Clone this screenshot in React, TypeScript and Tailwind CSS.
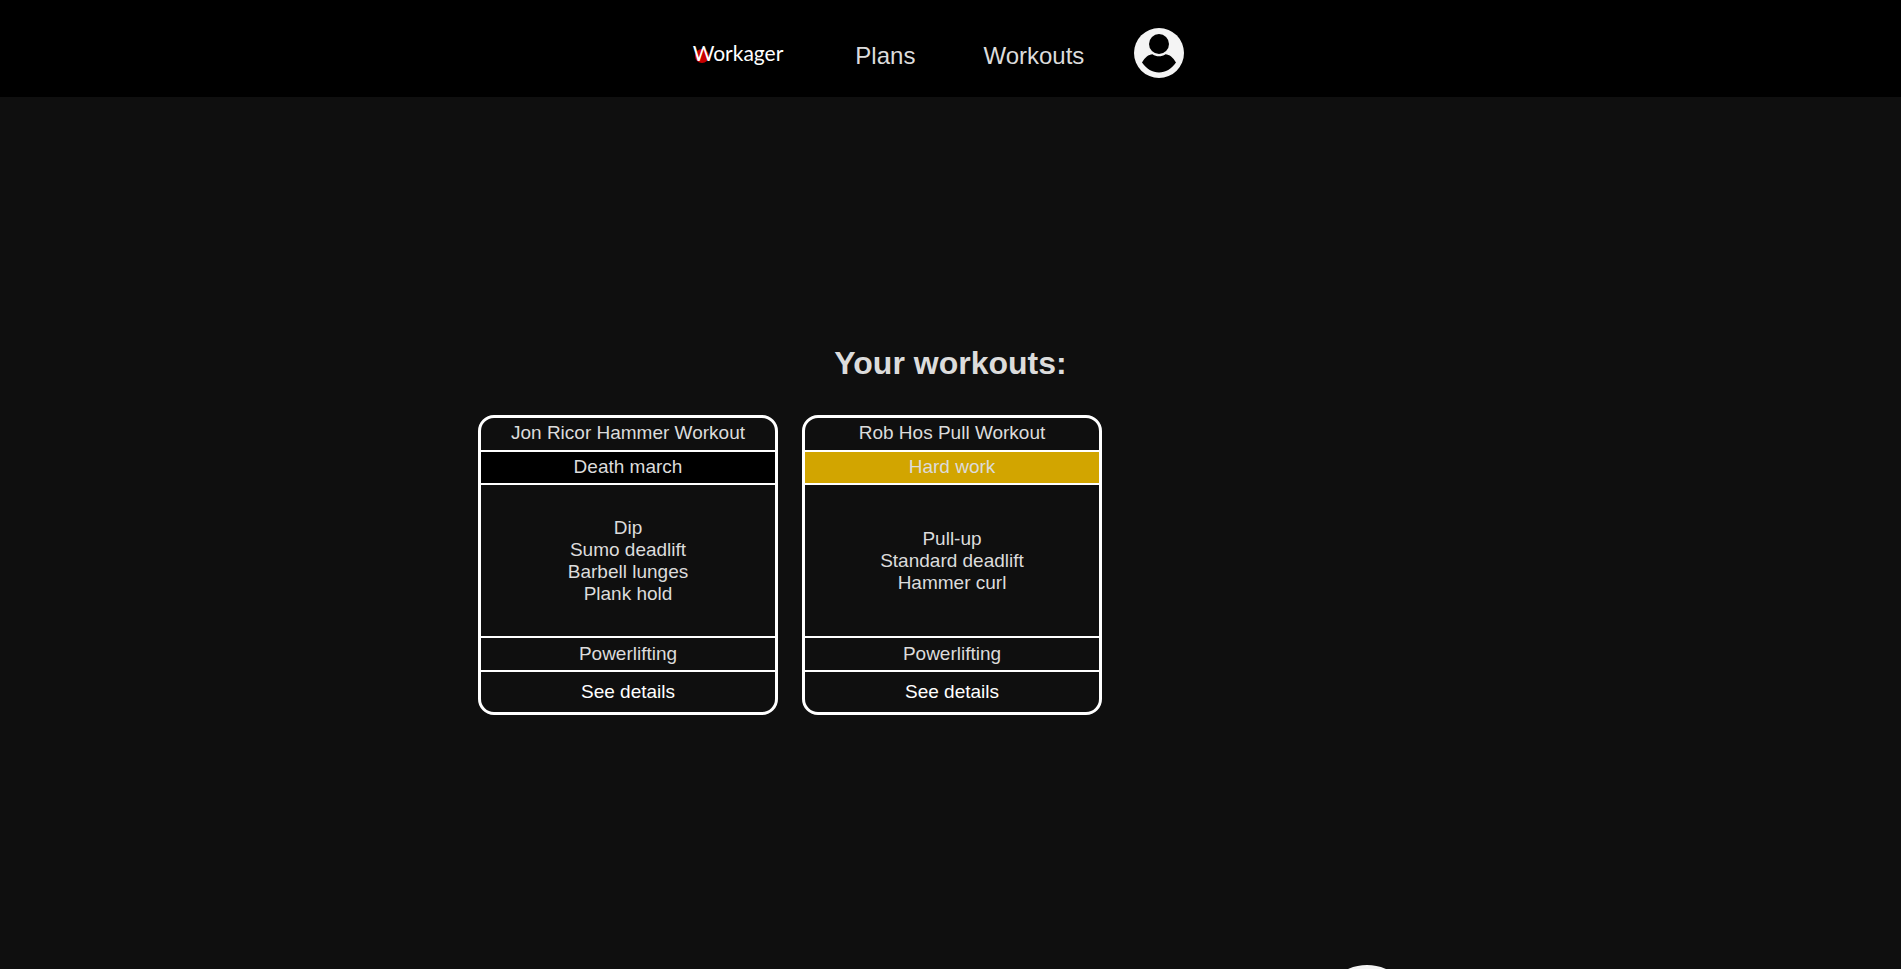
type Workout = {
  name: string;
  intensity: string;
  intensityClass: string;
  exercises: string[];
  category: string;
};

const workouts: Workout[] = [
  {
    name: "Jon Ricor Hammer Workout",
    intensity: "Death march",
    intensityClass: "bg-black",
    exercises: ["Dip", "Sumo deadlift", "Barbell lunges", "Plank hold"],
    category: "Powerlifting",
  },
  {
    name: "Rob Hos Pull Workout",
    intensity: "Hard work",
    intensityClass: "bg-[#d2a500]",
    exercises: ["Pull-up", "Standard deadlift", "Hammer curl"],
    category: "Powerlifting",
  },
];

function Logo() {
  return (
    <a href="#home" className="relative block font-['Lato',sans-serif] text-[21px] leading-7 text-white">
      <span aria-hidden="true" className="absolute top-2.5 left-0.5 size-3.5 rounded-full bg-[#c80000]" />
      <span className="relative">Workager</span>
    </a>
  );
}

function ProfileIcon() {
  return (
    <svg viewBox="0 0 50 50" className="size-[50px]" aria-hidden="true">
      <circle cx="25" cy="25" r="25" fill="#f4f4f4" />
      <circle cx="25" cy="16" r="10" fill="#000" />
      <path d="M8 34.500C11 29.500 14.500 26.500 18.500 26.300C22.500 29 27.500 29 31.500 26.300C35.500 26.500 39 29.500 42 34.500C37.500 41 31.500 44.500 25 44.500S12.500 41 8 34.500Z" fill="#000" />
    </svg>
  );
}

function Header() {
  return (
    <header className="flex h-[97px] items-center justify-center bg-black pt-2">
      <nav className="flex items-center pr-6">
        <div className="pr-[72px]">
          <Logo />
        </div>
        <a href="#plans" className="pt-1.5 pr-[68px] text-2xl leading-8">Plans</a>
        <a href="#workouts" className="pt-1.5 pr-[50px] text-2xl leading-8">Workouts</a>
        <button type="button" aria-label="Profile" className="cursor-pointer">
          <ProfileIcon />
        </button>
      </nav>
    </header>
  );
}

function WorkoutCard({ workout }: { workout: Workout }) {
  return (
    <article className="flex h-[300px] w-[300px] flex-col overflow-hidden rounded-2xl border-[3px] border-white text-center text-[19px] leading-[22px]">
      <h2 className="border-b-2 border-white pt-1 pb-1.5">{workout.name}</h2>
      <p className={`border-b-2 border-white pt-1 pb-[5px] ${workout.intensityClass}`}>{workout.intensity}</p>
      <ul className="flex grow flex-col justify-center border-b-2 border-white">
        {workout.exercises.map((exercise) => (
          <li key={exercise}>{exercise}</li>
        ))}
      </ul>
      <p className="border-b-2 border-white py-[5px]">{workout.category}</p>
      <button type="button" className="h-10 cursor-pointer text-white">See details</button>
    </article>
  );
}

export default function App() {
  return (
    <div className="h-screen overflow-x-hidden overflow-y-auto bg-[#0f0f0f] font-['Liberation_Sans',Arial,sans-serif] text-[#dcdcdc] [scrollbar-width:none]">
      <Header />
      <main className="mx-auto w-full max-w-[945px] pt-[248px] pb-12">
        <h1 className="text-center text-[32px] leading-9 font-bold">Your workouts:</h1>
        <section className="mt-[34px] flex flex-wrap gap-6">
          {workouts.map((workout) => (
            <WorkoutCard key={workout.name} workout={workout} />
          ))}
        </section>
        <div className="mt-[250px] flex justify-end pr-2">
          <button type="button" aria-label="Add workout" className="size-24 cursor-pointer rounded-full bg-[#f4f4f4]">
            <svg viewBox="0 0 96 96" aria-hidden="true">
              <path d="M48 26V70M26 48H70" stroke="#0f0f0f" strokeWidth="8" />
            </svg>
          </button>
        </div>
      </main>
    </div>
  );
}
